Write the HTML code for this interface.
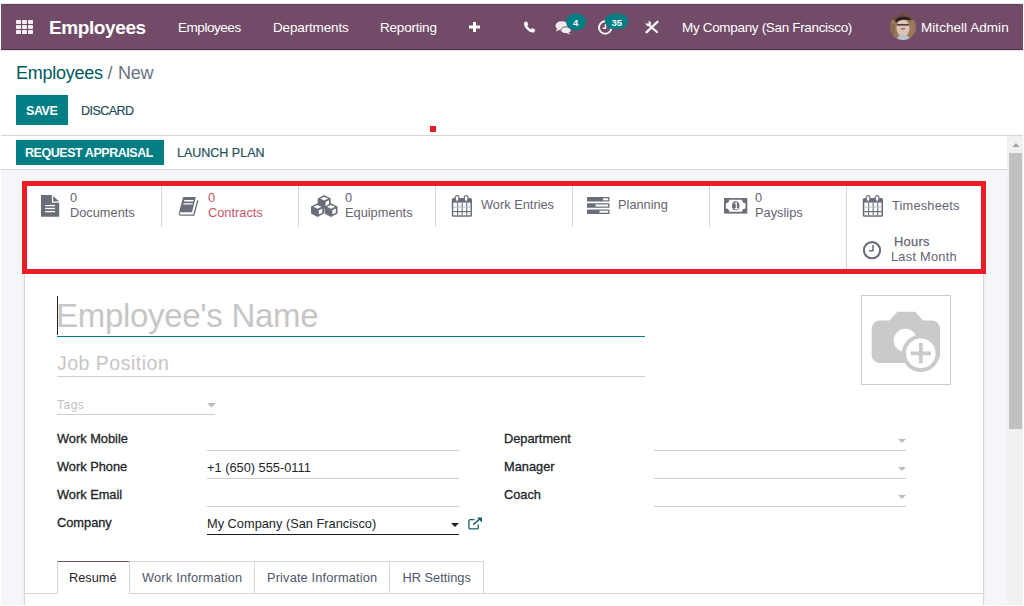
<!DOCTYPE html>
<html><head><meta charset="utf-8">
<style>
*{box-sizing:border-box;margin:0;padding:0}
html,body{width:1024px;height:606px;overflow:hidden;background:#fff}
body{position:relative;font-family:"Liberation Sans",sans-serif;color:#212529}
.a{position:absolute;white-space:pre;line-height:1}
.nav{position:absolute;left:1px;top:4px;width:1022px;height:46px;background:#714b67;border-top:1px solid #693f5f;border-bottom:1px solid #4e2d46;box-shadow:0 1px 1px rgba(0,0,0,.08)}
.nt{color:#fff;font-size:13.5px}
.bg{position:absolute;left:1px;top:170px;width:1006px;height:435px;background:#f5f6fa}
.line{position:absolute;height:1px;background:#d3d5dc}
.btnp{position:absolute;background:#017e84}
.sheet{position:absolute;left:24px;top:181px;width:960px;height:500px;background:#fff;border:1px solid #d5d7dc;box-shadow:0 0 2px rgba(0,0,0,.08)}
.red{position:absolute;left:22px;top:181px;width:964px;height:93px;border:5px solid #ed1c24}
.sep{position:absolute;width:1px;background:#d6d6d6}
.st{color:#666373;font-size:12.8px}
.lbl{font-weight:400;font-size:12.8px;color:#212529;letter-spacing:0px;-webkit-text-stroke:.3px #212529}
.ul{position:absolute;height:1px;background:#cfcfcf}
.tab{position:absolute;top:561px;height:33px;border:1px solid #d5d7dc;border-bottom:none}
.tt{font-size:12.8px;color:#4d566b}
</style></head><body>

<!-- navbar -->
<div class="a" style="left:1px;top:3px;width:1022px;height:1px;background:#ebebeb"></div>
<div class="nav"></div>
<svg class="a" style="left:16px;top:20px" width="17" height="14" viewBox="0 0 17 14"><g fill="#f2eef2"><rect x="0" y="0" width="5" height="4" rx="0.7"/><rect x="6" y="0" width="5" height="4" rx="0.7"/><rect x="12" y="0" width="5" height="4" rx="0.7"/><rect x="0" y="5" width="5" height="4" rx="0.7"/><rect x="6" y="5" width="5" height="4" rx="0.7"/><rect x="12" y="5" width="5" height="4" rx="0.7"/><rect x="0" y="10" width="5" height="4" rx="0.7"/><rect x="6" y="10" width="5" height="4" rx="0.7"/><rect x="12" y="10" width="5" height="4" rx="0.7"/></g></svg>
<div class="a nt" style="left:49px;top:17.5px;font-size:19px;font-weight:700;letter-spacing:-0.4px">Employees</div>
<div class="a nt" style="left:178px;top:20.5px;letter-spacing:-0.45px">Employees</div>
<div class="a nt" style="left:273px;top:20.5px;letter-spacing:-0.15px">Departments</div>
<div class="a nt" style="left:380px;top:20.5px;letter-spacing:-0.2px">Reporting</div>
<svg class="a" style="left:469px;top:22px" width="11" height="10" viewBox="0 0 11 10"><path d="M4 0h3v3.5h4v3H7V10H4V6.5H0v-3h4z" fill="#fff"/></svg>
<!-- phone -->
<svg class="a" style="left:523px;top:21px" width="13" height="12" viewBox="0 0 13 12"><path fill-rule="nonzero" d="M1.5 1.2 3.6 0.3 5.4 3.2 4.2 4.6C4.9 6.3 6.3 7.6 8 8.4L9.3 7.1 12.3 8.8 11.4 11C9.8 12.3 6.6 11.2 4 8.5 1.4 5.9 0.2 2.8 1.5 1.2Z" fill="#fff"/></svg>
<!-- chat -->
<svg class="a" style="left:555px;top:20px" width="17" height="15" viewBox="0 0 17 15"><ellipse cx="6.8" cy="5.8" rx="6.3" ry="4.6" fill="#f0ecf0"/><path d="M1.8 9 1.2 11.5 5 9.6z" fill="#f0ecf0"/><ellipse cx="11" cy="10.2" rx="5.2" ry="3.4" fill="#f0ecf0" stroke="#714b67" stroke-width=".9"/><path d="M13.5 12.5 15.5 14.6 11.5 13.2z" fill="#f0ecf0"/></svg>
<div class="a" style="left:566px;top:14px;width:20px;height:16px;border-radius:8px;background:#017e84"></div>
<div class="a" style="left:573px;top:18.3px;font-size:9.6px;font-weight:700;color:#fff">4</div>
<!-- clock -->
<svg class="a" style="left:597px;top:20px" width="16" height="16" viewBox="0 0 16 16"><circle cx="8.2" cy="7.5" r="6.2" fill="none" stroke="#f0ecf0" stroke-width="2"/><path d="M8.5 4V8.3H5.6" fill="none" stroke="#f0ecf0" stroke-width="1.6"/></svg>
<div class="a" style="left:605px;top:14px;width:23px;height:15px;border-radius:7.5px;background:#017e84"></div>
<div class="a" style="left:611.5px;top:17.6px;font-size:9.6px;font-weight:700;color:#fff">35</div>
<!-- tools -->
<svg class="a" style="left:645px;top:20px" width="14" height="14" viewBox="0 0 14 14"><path d="M1.6 12.2 12.4 1.8" stroke="#f4f2f4" stroke-width="2.5" stroke-linecap="round"/><path d="M5 6 12 12" stroke="#f4f2f4" stroke-width="2.3" stroke-linecap="round"/><circle cx="3.4" cy="3.6" r="2.7" fill="#f4f2f4"/><circle cx="2.4" cy="2.2" r="1.3" fill="#714b67"/><path d="M1.2 0.5 3.6 2.6 1.6 3.6Z" fill="#714b67"/></svg>
<div class="a nt" style="left:682px;top:21px;letter-spacing:-0.33px">My Company (San Francisco)</div>
<svg class="a" style="left:890px;top:14px" width="26" height="26" viewBox="0 0 26 26">
<defs><clipPath id="avc"><circle cx="13" cy="13" r="13"/></clipPath></defs>
<g clip-path="url(#avc)"><rect width="26" height="26" fill="#9a7859"/>
<rect x="0" y="0" width="26" height="6" fill="#6b4a3c"/>
<ellipse cx="13" cy="14" rx="6.5" ry="9" fill="#d9c4b6"/>
<path d="M5 7C7 2 19 1 21 7 19 5 8 5 6 9Z" fill="#2c1d22"/>
<rect x="7" y="10" width="12" height="1.6" fill="#5a3a3a"/>
<rect x="11" y="14" width="4" height="1.5" fill="#b5606a"/>
<path d="M7 26C7 22 10 21 13 21 17 21 19 22 20 26Z" fill="#b9c3cc"/>
<rect x="0" y="10" width="5" height="10" fill="#8b6a50"/></g></svg>
<div class="a nt" style="left:921px;top:21px;letter-spacing:0.05px">Mitchell Admin</div>

<!-- control panel -->
<div class="a" style="left:16px;top:63.5px;font-size:18px;color:#01585d;letter-spacing:-0.25px">Employees <span style="color:#6b7280">/<span style="margin-left:1px"> New</span></span></div>
<div class="btnp" style="left:16px;top:95px;width:52px;height:30px"></div>
<div class="a" style="left:26px;top:105px;font-size:12.5px;font-weight:700;color:#fff;letter-spacing:-0.45px">SAVE</div>
<div class="a" style="left:81px;top:105px;font-size:12.5px;color:#1f4f5c;letter-spacing:-0.55px;-webkit-text-stroke:.2px #1f4f5c">DISCARD</div>
<div class="a" style="left:432px;top:126px;width:6px;height:6px;background:#ed1c24;left:430px"></div>
<div class="line" style="left:1px;top:135px;width:1022px"></div>
<div class="btnp" style="left:16px;top:140px;width:148px;height:25px"></div>
<div class="a" style="left:25px;top:146.5px;font-size:12.5px;font-weight:700;color:#fff;letter-spacing:-0.45px">REQUEST APPRAISAL</div>
<div class="a" style="left:177px;top:146.5px;font-size:12.5px;color:#1f4f5c;letter-spacing:0px;-webkit-text-stroke:.2px #1f4f5c">LAUNCH PLAN</div>

<div class="bg"></div>
<div class="line" style="left:1px;top:169px;width:1006px"></div>

<!-- scrollbar -->
<div class="a" style="left:1007px;top:136px;width:16px;height:469px;background:#f1f1f1"></div>
<svg class="a" style="left:1011.5px;top:142.8px" width="8" height="4.5" viewBox="0 0 8 4.5"><path d="M0 4.5 4 0 8 4.5z" fill="#a39fa9"/></svg>
<div class="a" style="left:1009px;top:153px;width:13px;height:276px;background:#c1c1c1"></div>

<!-- sheet -->
<div class="sheet"></div>

<!-- stat buttons -->
<div class="sep" style="left:161px;top:186px;height:41px"></div>
<div class="sep" style="left:298px;top:186px;height:41px"></div>
<div class="sep" style="left:435px;top:186px;height:41px"></div>
<div class="sep" style="left:572px;top:186px;height:41px"></div>
<div class="sep" style="left:709px;top:186px;height:41px"></div>
<div class="sep" style="left:846px;top:186px;height:83px"></div>

<!-- documents icon -->
<svg class="a" style="left:41px;top:195px" width="19" height="22" viewBox="0 0 19 22"><path d="M0 0H10.9V7.7H18.2V21.7H0Z" fill="#6a6e7a"/><path d="M12.2 0.9V6.5H18Z" fill="#6a6e7a"/><rect x="4.2" y="9.95" width="9.8" height="1.3" fill="#fff"/><rect x="4.2" y="12.85" width="9.8" height="1.3" fill="#fff"/><rect x="4.2" y="15.95" width="9.8" height="1.3" fill="#fff"/></svg>
<div class="a st" style="left:70px;top:192px">0</div>
<div class="a st" style="left:70px;top:207px">Documents</div>

<!-- book icon -->
<svg class="a" style="left:178px;top:196px" width="21" height="21" viewBox="0 0 21 21"><path d="M5.1 1H17.8L14 16.3H1.1Z" fill="#6a6e7a"/><path d="M1.1 16.2C0.3 17.4 0.6 19.7 2.4 19.7H15.3L15.6 18.4H2.7C1.6 18.4 1.5 17 2.2 16.2Z" fill="#6a6e7a"/><path d="M19.9 4.3 15.5 19.7" stroke="#6a6e7a" stroke-width="1.3"/><path d="M6.4 4H15.6L15.2 5.4H6Z" fill="#fff"/><path d="M5.6 7.2H14.8L14.4 8.6H5.2Z" fill="#fff"/></svg>
<div class="a st" style="left:208px;top:192px;color:#c75468">0</div>
<div class="a st" style="left:208px;top:207px;color:#c75468">Contracts</div>

<!-- cubes icon -->
<svg class="a" style="left:310.5px;top:195px" width="27" height="22" viewBox="0 0 27 22"><g transform="translate(6.7,0)"><path d="M6.5 0 13 3.4V10.4L6.5 13.8 0 10.4V3.4Z" fill="#6a6e7a"/><path d="M6.5 1.9 10.6 3.6 6.5 5.5 2.4 3.6Z" fill="#fff"/><path d="M7.8 7 11.3 5.3V9.6L7.8 11.4Z" fill="#fff"/></g><g transform="translate(0,8.2)"><path d="M6.5 0 13 3.4V10.4L6.5 13.8 0 10.4V3.4Z" fill="#6a6e7a"/><path d="M6.5 1.9 10.6 3.6 6.5 5.5 2.4 3.6Z" fill="#fff"/><path d="M7.8 7 11.3 5.3V9.6L7.8 11.4Z" fill="#fff"/></g><g transform="translate(13.5,8.2)"><path d="M6.5 0 13 3.4V10.4L6.5 13.8 0 10.4V3.4Z" fill="#6a6e7a"/><path d="M6.5 1.9 10.6 3.6 6.5 5.5 2.4 3.6Z" fill="#fff"/><path d="M7.8 7 11.3 5.3V9.6L7.8 11.4Z" fill="#fff"/></g></svg>
<div class="a st" style="left:345px;top:192px">0</div>
<div class="a st" style="left:345px;top:207px">Equipments</div>

<!-- calendar icon -->
<svg class="a" style="left:451px;top:195px" width="22" height="23" viewBox="0 0 22 23"><rect x="0.8" y="3" width="20.2" height="18.8" rx="1.6" fill="#6a6e7a"/><rect x="2.3" y="7.6" width="17.2" height="12.7" fill="#fff"/><g fill="#6a6e7a"><rect x="6.1" y="7.6" width="1.1" height="12.7"/><rect x="10.6" y="7.6" width="1.1" height="12.7"/><rect x="15.2" y="7.6" width="1.1" height="12.7"/><rect x="2.3" y="16" width="17.2" height="1.2"/></g><rect x="2.3" y="11.6" width="17.2" height="1" fill="#b9bac2"/><rect x="4.3" y="0.6" width="3.6" height="5.8" rx="1.8" fill="#fff" stroke="#6a6e7a" stroke-width="1.2"/><rect x="13.3" y="0.6" width="3.6" height="5.8" rx="1.8" fill="#fff" stroke="#6a6e7a" stroke-width="1.2"/></svg>
<div class="a st" style="left:481px;top:199px">Work Entries</div>

<!-- tasks icon -->
<svg class="a" style="left:587px;top:197px" width="23" height="17" viewBox="0 0 23 17"><g fill="#6a6e7a"><rect x="0" y="0" width="22.5" height="4.6" rx=".6"/><rect x="0" y="6.2" width="22.5" height="4.6" rx=".6"/><rect x="0" y="12.4" width="22.5" height="4.6" rx=".6"/></g><g fill="#fff"><rect x="16" y="1.3" width="5.2" height="2"/><rect x="8.5" y="7.5" width="12.7" height="2"/><rect x="12.5" y="13.7" width="8.7" height="2"/></g></svg>
<div class="a st" style="left:618px;top:199px">Planning</div>

<!-- money icon -->
<svg class="a" style="left:723.5px;top:198px" width="24" height="16" viewBox="0 0 24 16"><rect x="0" y="0" width="23.3" height="15.6" fill="#6a6e7a"/><path d="M5.2 1.8H18.1A3.4 3.4 0 0 0 21.5 5.2V10.4A3.4 3.4 0 0 0 18.1 13.8H5.2A3.4 3.4 0 0 0 1.8 10.4V5.2A3.4 3.4 0 0 0 5.2 1.8Z" fill="#fff"/><ellipse cx="11.7" cy="7.8" rx="3.7" ry="4.5" fill="#6a6e7a"/><path d="M10.6 5.6 12.3 4.9V10.6M10.6 10.6H13.9" stroke="#fff" stroke-width="1.1" fill="none"/></svg>
<div class="a st" style="left:755px;top:192px">0</div>
<div class="a st" style="left:755px;top:207px">Payslips</div>

<!-- timesheets calendar -->
<svg class="a" style="left:861.5px;top:195px" width="22" height="23" viewBox="0 0 22 23"><rect x="0.8" y="3" width="20.2" height="18.8" rx="1.6" fill="#6a6e7a"/><rect x="2.3" y="7.6" width="17.2" height="12.7" fill="#fff"/><g fill="#6a6e7a"><rect x="6.1" y="7.6" width="1.1" height="12.7"/><rect x="10.6" y="7.6" width="1.1" height="12.7"/><rect x="15.2" y="7.6" width="1.1" height="12.7"/><rect x="2.3" y="16" width="17.2" height="1.2"/></g><rect x="2.3" y="11.6" width="17.2" height="1" fill="#b9bac2"/><rect x="4.3" y="0.6" width="3.6" height="5.8" rx="1.8" fill="#fff" stroke="#6a6e7a" stroke-width="1.2"/><rect x="13.3" y="0.6" width="3.6" height="5.8" rx="1.8" fill="#fff" stroke="#6a6e7a" stroke-width="1.2"/></svg>
<div class="a st" style="left:892px;top:200px;letter-spacing:0.2px">Timesheets</div>

<!-- clock icon -->
<svg class="a" style="left:862px;top:241px" width="20" height="19" viewBox="0 0 20 19"><circle cx="10" cy="9.2" r="8.1" fill="none" stroke="#6a6e7a" stroke-width="2.1"/><path d="M11 4V9.8H7.1" fill="none" stroke="#6a6e7a" stroke-width="1.6"/></svg>
<div class="a st" style="left:894px;top:236px;letter-spacing:.3px;-webkit-text-stroke:.25px #666373">Hours</div>
<div class="a st" style="left:891px;top:250.5px;letter-spacing:0.25px">Last Month</div>

<div class="red"></div>

<!-- name -->
<div class="a" style="left:57px;top:296px;width:1px;height:39px;background:#222"></div>
<div class="a" style="left:56px;top:299px;font-size:33px;color:#c6c6c6;letter-spacing:-0.3px">Employee's Name</div>
<div class="a" style="left:57px;top:336px;width:588px;height:1px;background:#017e84"></div>
<div class="a" style="left:57px;top:354px;font-size:19.5px;color:#c6c6c6;letter-spacing:0.5px">Job Position</div>
<div class="ul" style="left:57px;top:376px;width:588px"></div>
<div class="a" style="left:57px;top:399px;font-size:12px;color:#c0c0c0;letter-spacing:0.5px">Tags</div>
<svg class="a" style="left:207px;top:403px" width="9" height="5" viewBox="0 0 9 5"><path d="M0 0H9L4.5 4.5Z" fill="#bdbdbd"/></svg>
<div class="ul" style="left:57px;top:414px;width:158px"></div>

<!-- image placeholder -->
<div class="a" style="left:861px;top:295px;width:90px;height:90px;border:1px solid #c9ccd2"></div>
<svg class="a" style="left:871px;top:311px" width="75" height="66" viewBox="0 0 75 66">
<path d="M18.5 9.6 26.4 0.7H44.2L52 9.6H61A8 8 0 0 1 69 17.6V44A8 8 0 0 1 61 52H8.7A8 8 0 0 1 0.7 44V17.6A8 8 0 0 1 8.7 9.6Z" fill="#cacaca"/>
<circle cx="34.3" cy="29.4" r="11.6" fill="#fff"/>
<circle cx="49.8" cy="42.3" r="18.8" fill="#cacaca"/>
<circle cx="49.8" cy="42.3" r="14.8" fill="#fff"/>
<path d="M49.8 32V52.3M39.7 42.3H60" stroke="#cacaca" stroke-width="3.8"/>
</svg>

<!-- fields -->
<div class="a lbl" style="left:57px;top:433px">Work Mobile</div>
<div class="ul" style="left:207px;top:450px;width:252px"></div>
<div class="a lbl" style="left:57px;top:461px">Work Phone</div>
<div class="a" style="left:207px;top:462px;font-size:12.8px;color:#212529">+1 (650) 555-0111</div>
<div class="ul" style="left:207px;top:478px;width:252px"></div>
<div class="a lbl" style="left:57px;top:489px">Work Email</div>
<div class="ul" style="left:207px;top:506px;width:252px"></div>
<div class="a lbl" style="left:57px;top:517px">Company</div>
<div class="a" style="left:207px;top:518px;font-size:12.8px;color:#212529;letter-spacing:0px">My Company (San Francisco)</div>
<svg class="a" style="left:451px;top:523px" width="8" height="4" viewBox="0 0 8 4"><path d="M0 0H8L4 4Z" fill="#1a1a2a"/></svg>
<div class="a" style="left:207px;top:534px;width:252px;height:1px;background:#1a1a2a"></div>
<svg class="a" style="left:468px;top:517px" width="15" height="13" viewBox="0 0 15 13"><path d="M6.5 2.6H2.2A1.3 1.3 0 0 0 0.9 3.9V10.6A1.3 1.3 0 0 0 2.2 11.9H9A1.3 1.3 0 0 0 10.3 10.6V7.5" fill="none" stroke="#145f6b" stroke-width="1.3"/><path d="M5.2 7.6 12.2 1.6" stroke="#145f6b" stroke-width="1.4"/><path d="M9 0.6H14V5.6Z" fill="#145f6b"/></svg>

<div class="a lbl" style="left:504px;top:433px">Department</div>
<svg class="a" style="left:898px;top:439px" width="8" height="4" viewBox="0 0 8 4"><path d="M0 0H8L4 4Z" fill="#bdbdbd"/></svg>
<div class="ul" style="left:654px;top:450px;width:252px"></div>
<div class="a lbl" style="left:504px;top:461px">Manager</div>
<svg class="a" style="left:898px;top:467px" width="8" height="4" viewBox="0 0 8 4"><path d="M0 0H8L4 4Z" fill="#bdbdbd"/></svg>
<div class="ul" style="left:654px;top:478px;width:252px"></div>
<div class="a lbl" style="left:504px;top:489px">Coach</div>
<svg class="a" style="left:898px;top:495px" width="8" height="4" viewBox="0 0 8 4"><path d="M0 0H8L4 4Z" fill="#bdbdbd"/></svg>
<div class="ul" style="left:654px;top:506px;width:252px"></div>

<!-- tabs -->
<div class="line" style="left:25px;top:593px;width:958px;background:#d5d7dc"></div>
<div class="tab" style="left:57px;width:73px;background:#fff;border-top:1px solid #714b67;height:33px"></div>
<div class="tab" style="left:129px;width:126px"></div>
<div class="tab" style="left:254px;width:136px"></div>
<div class="tab" style="left:389px;width:95px"></div>
<div class="a tt" style="left:69px;top:571.8px;color:#212529">Resumé</div>
<div class="a tt" style="left:142px;top:571.8px;letter-spacing:0.2px">Work Information</div>
<div class="a tt" style="left:267px;top:571.8px;letter-spacing:0.15px">Private Information</div>
<div class="a tt" style="left:402.5px;top:571.8px">HR Settings</div>

<div class="a" style="left:0;top:605px;width:1024px;height:1px;background:#fff"></div>
<div class="a" style="left:1023px;top:0;width:1px;height:606px;background:#fff"></div>
</body></html>
